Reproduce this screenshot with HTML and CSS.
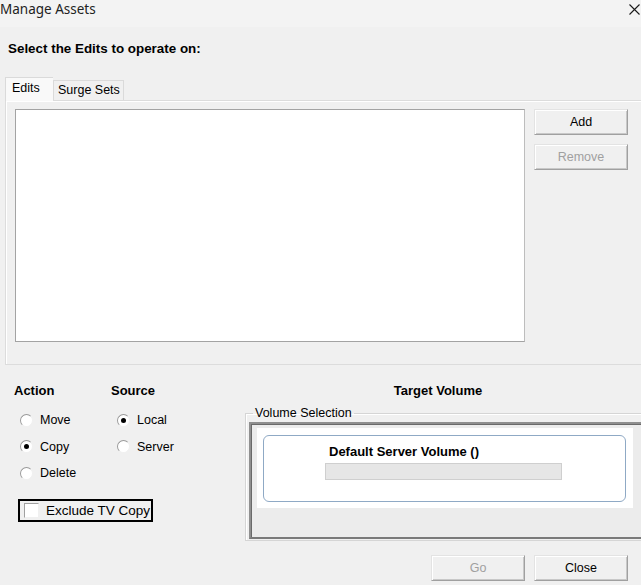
FILE: index.html
```html
<!DOCTYPE html>
<html lang="en">
<head>
    <meta charset="UTF-8">
    <meta name="viewport" content="width=device-width, initial-scale=1.0">
    <title>Manage Assets</title>
    <link rel="stylesheet" href="styles.css">
</head>
<body>
    <div class="window">
        <div class="titlebar">
            <span class="title">Manage Assets</span>
            <svg class="close-x" width="11" height="11" viewBox="0 0 11 11">
                <path d="M0.5 0.5 L10.5 10.5 M10.5 0.5 L0.5 10.5" stroke="#1a1a1a" stroke-width="1.1" fill="none"/>
            </svg>
        </div>

        <div class="heading">Select the Edits to operate on:</div>

        <div class="tabs">
            <div class="tab active">Edits</div>
            <div class="tab">Surge Sets</div>
        </div>
        <div class="tab-panel">
            <div class="listbox"></div>
            <div class="side-buttons">
                <button class="btn">Add</button>
                <button class="btn" disabled>Remove</button>
            </div>
        </div>

        <div class="lower">
            <div class="options">
                <div class="option-cols">
                    <div class="option-col action-col">
                        <div class="col-title">Action</div>
                        <label class="radio-row"><span class="radio"></span>Move</label>
                        <label class="radio-row"><span class="radio checked"></span>Copy</label>
                        <label class="radio-row"><span class="radio"></span>Delete</label>
                    </div>
                    <div class="option-col">
                        <div class="col-title">Source</div>
                        <label class="radio-row"><span class="radio checked"></span>Local</label>
                        <label class="radio-row"><span class="radio"></span>Server</label>
                    </div>
                </div>
                <label class="check-frame"><span class="checkbox"></span>Exclude TV Copy</label>
            </div>

            <div class="target">
                <div class="target-title">Target Volume</div>
                <fieldset class="group">
                    <legend>Volume Selection</legend>
                    <div class="sunken">
                        <div class="white-area">
                            <div class="volume-box">
                                <div class="volume-name">Default Server Volume ()</div>
                                <div class="volume-bar"></div>
                            </div>
                        </div>
                    </div>
                </fieldset>
            </div>
        </div>

        <div class="footer">
            <button class="btn" disabled>Go</button>
            <button class="btn">Close</button>
        </div>
    </div>
</body>
</html>
```

FILE: styles.css
```css
body {
    margin: 0;
    background-color: #f0f0f0;
    font-family: "Liberation Sans", Arial, sans-serif;
    font-size: 12.5px;
    color: #000;
    overflow: hidden;
}
.window {
    width: 641px;
    height: 585px;
    overflow: hidden;
}
.titlebar {
    height: 27px;
    background-color: #f3f3f3;
    display: flex;
    justify-content: space-between;
    align-items: flex-start;
}
.title {
    font-family: "Noto Sans", "Open Sans", sans-serif;
    font-size: 13.5px;
    line-height: 19px;
    color: #222;
}
.close-x {
    margin-top: 4px;
    margin-right: 1px;
}
.heading {
    margin: 14px 0 0 8px;
    font-weight: bold;
    line-height: 16px;
    font-size: 13.4px;
}
.tabs {
    display: flex;
    align-items: flex-end;
    margin: 21px 0 0 5px;
    height: 22px;
}
.tab {
    height: 19px;
    line-height: 19px;
    padding: 0 3px 0 4px;
    border: 1px solid #dadada;
    border-bottom: none;
    background-color: #f0f0f0;
}
.tab.active {
    height: 23px;
    line-height: 21px;
    width: 36px;
    padding: 0 5px 0 6px;
    background-color: #f9f9f9;
    border-right: none;
    margin-bottom: -1px;
    position: relative;
    z-index: 1;
}
.tab-panel {
    margin-left: 5px;
    height: 255px;
    border: 1px solid #dcdcdc;
    border-right: none;
    box-shadow: inset 1px 1px 0 #fff;
    padding: 8px 0 0 9px;
    display: flex;
    gap: 9px;
}
.listbox {
    width: 508px;
    height: 231px;
    background-color: #fff;
    border: 1px solid #a3a3a3;
    border-right-color: #bdbdbd;
}
.side-buttons {
    display: flex;
    flex-direction: column;
    gap: 9px;
}
.btn {
    width: 94px;
    height: 26px;
    padding: 0;
    font-family: inherit;
    font-size: 12.5px;
    color: #000;
    background-color: #f0f0f0;
    border: 1px solid;
    border-color: #e3e3e3 #a0a0a0 #a0a0a0 #e3e3e3;
    box-shadow: inset 1px 1px 0 #fff, inset -1px -1px 0 #c8c8c8;
}
.btn:disabled {
    color: #a0a0a0;
}
.lower {
    display: grid;
    grid-template-columns: 245px minmax(0, 1fr);
    padding-top: 18px;
}
.options {
    padding-left: 14px;
}
.option-cols {
    display: flex;
}
.action-col {
    width: 97px;
}
.col-title {
    font-weight: bold;
    line-height: 16px;
    font-size: 13px;
    margin-bottom: 8px;
}
.radio-row {
    display: flex;
    align-items: center;
    height: 26.5px;
    padding-left: 6px;
}
.radio {
    width: 11px;
    height: 11px;
    border-radius: 50%;
    background-color: #fff;
    border: 1px solid;
    border-color: #9a9a9a #f0f0f0 #f0f0f0 #9a9a9a;
    margin-right: 7px;
    display: flex;
    align-items: center;
    justify-content: center;
}
.radio.checked::after {
    content: "";
    width: 5px;
    height: 5px;
    border-radius: 50%;
    background-color: #000;
}
.check-frame {
    display: flex;
    align-items: center;
    width: 127px;
    height: 19px;
    margin: 12px 0 0 4px;
    border: 2px solid #000;
    font-size: 13.5px;
    padding-left: 4px;
}
.checkbox {
    width: 13px;
    height: 13px;
    background-color: #fff;
    border: 1px solid;
    border-color: #a0a0a0 #f0f0f0 #f0f0f0 #a0a0a0;
    margin-right: 7px;
}
.target-title {
    font-weight: bold;
    font-size: 13px;
    line-height: 16px;
    text-align: center;
    padding-right: 10px;
}
.group {
    margin: 6px 0 0 0;
    width: 440px;
    padding: 1px 0 1px 3px;
    border: 1px solid #d5d5d5;
    box-shadow: inset 1px 1px 0 #fff;
}
.group legend {
    padding: 0 2px;
    margin-left: 4px;
    line-height: 16px;
}
.sunken {
    border: 2px solid;
    border-color: #8f8f8f #f8f8f8 #7a7a7a #8f8f8f;
    box-shadow: inset 1px 1px 0 #6a6a6a;
    padding: 4px 0 29px 6px;
    background-color: #ececec;
}
.white-area {
    width: 364px;
    height: 73px;
    background-color: #fff;
    padding: 7px 6px 0 6px;
}
.volume-box {
    width: 361px;
    height: 65px;
    border: 1px solid #8fa9c5;
    border-radius: 6px;
}
.volume-name {
    font-weight: bold;
    font-size: 13px;
    line-height: 16px;
    margin: 8px 0 0 65px;
}
.volume-bar {
    width: 235px;
    height: 15px;
    margin: 3px 0 0 61px;
    background-color: #e6e6e6;
    border: 1px solid #cfcfcf;
}
.footer {
    display: flex;
    justify-content: flex-end;
    gap: 9px;
    padding: 14px 13px 0 0;
}
```
